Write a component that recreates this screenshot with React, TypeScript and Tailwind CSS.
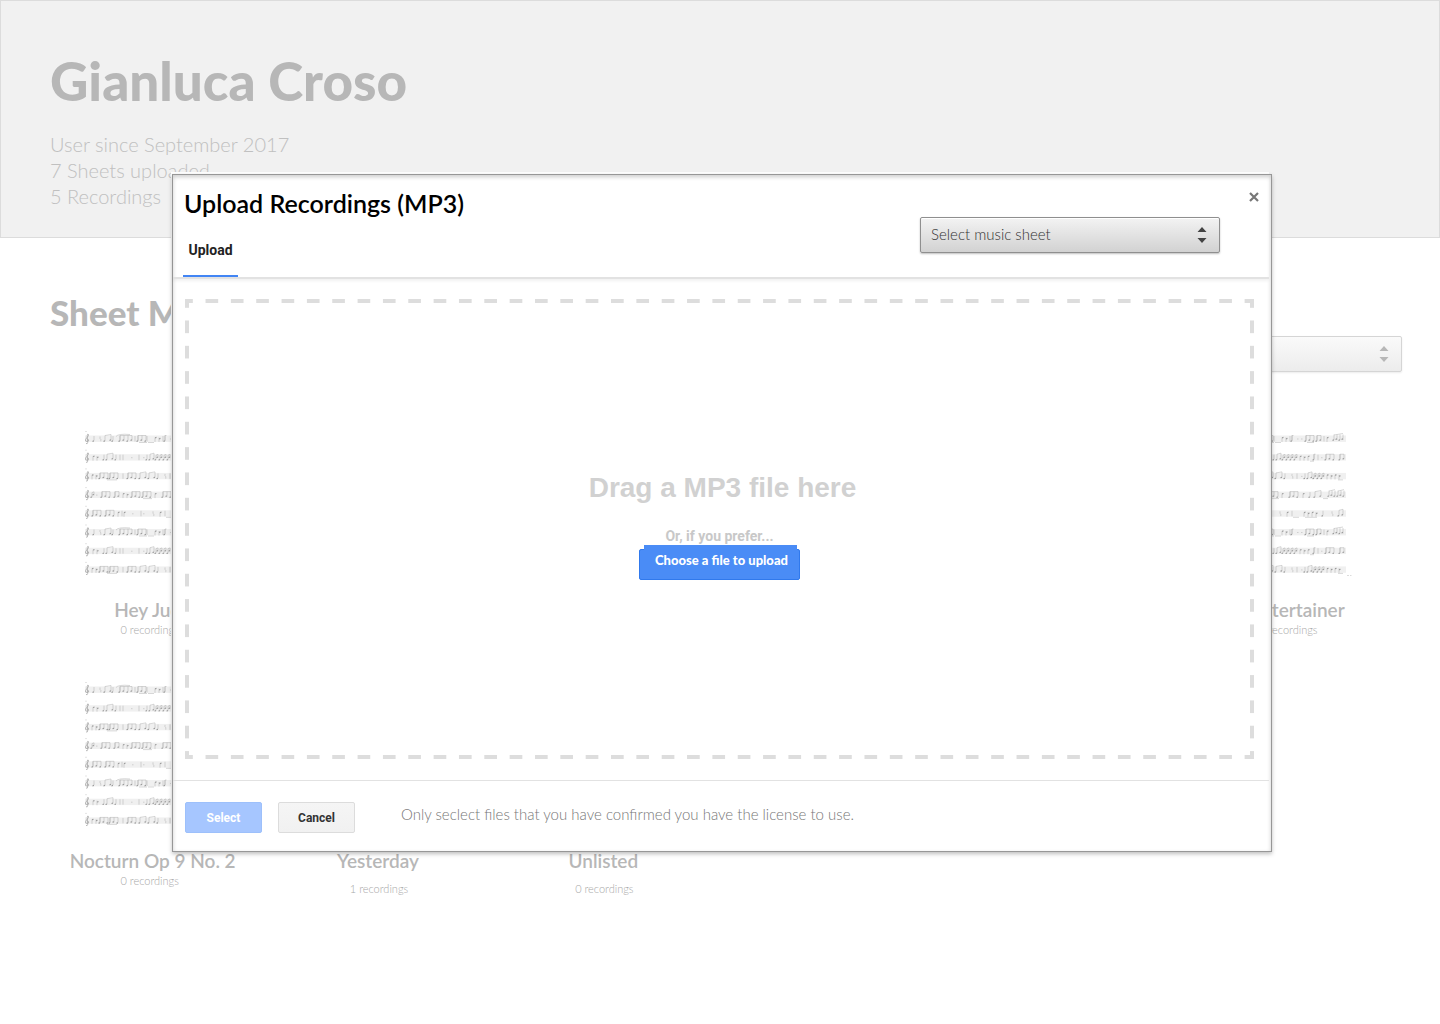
import React from "react";

const avenir = "font-['Lato',sans-serif]";

type Mark = [kind: string, x: number, n?: number];

const phrases: Mark[][] = [
  [["q", 9], ["r", 15], ["b", 20, 3], ["q", 28], ["s", 31, 14], ["g", 35, 4], ["|", 50], ["g", 53, 3], ["u", 54, 8], ["|", 62], ["u", 63, 6], ["p", 70, 2], ["|", 78], ["g", 80, 1], [".", 85], [".", 89], ["g", 94, 3], ["u", 95, 7], ["g", 105, 2], ["|", 112], ["p", 115, 1], ["h", 122, 4]],
  [["p", 8, 2], ["q", 19], ["b", 22, 3], ["q", 31], ["|", 35], ["|", 38], [".", 46], ["|", 54], [".", 58], ["q", 62], ["b", 65, 2], ["x", 71, 4], ["p", 88, 3], ["u", 98, 4], ["g", 102, 1], ["|", 106], [".", 109], ["g", 114, 3], ["g", 128, 2]],
  [["p", 7, 2], ["g", 15, 3], ["g", 25, 3], ["u", 22, 10], ["|", 38], ["g", 43, 3], ["b", 55, 3], ["b", 64, 3], ["q", 73], ["r", 80], ["|", 85], [".", 89], ["q", 93], ["b", 96, 2], ["x", 102, 3], ["p", 115, 4], ["u", 126, 5]],
  [["x", 7, 1], [".", 11], ["g", 17, 3], ["g", 30, 2], ["p", 38, 2], ["g", 47, 3], ["g", 58, 3], ["u", 58, 9], ["p", 70, 1], ["g", 78, 3], ["p", 91, 1], ["q", 98], ["b", 103, 3], ["u", 111, 5], ["h", 117, 3], ["h", 126, 3]],
  [["g", 8, 3], ["g", 21, 3], ["p", 33, 1], ["|", 37], ["p", 39, 1], [".", 47], ["|", 56], [".", 58], ["r", 68], ["p", 75, 1], ["|", 80], ["u", 81, 6], ["p", 92, 4], ["u", 93, 12], ["q", 111], ["r", 120], ["b", 127, 2]],
];
const staffOrder = [0, 1, 2, 3, 4, 0, 1, 2];

const head = (x: number, y: number) => `M${x - 1.5} ${y - 0.3}l1.500 -.4v1.200l-1.500 .4z`;

function drawHeads([kind, x, n = 1]: Mark): string {
  const steps = Array.from({ length: n }, (_, i) => i);
  switch (kind) {
    case "q":
      return head(x, 10.5);
    case "b":
      return head(x, 10.5) + head(x + n * 2, 9.5);
    case "g":
      return steps.map((i) => head(x + i * 4, 10.5 - (i % 2))).join("");
    case "p":
      return steps.map((i) => head(x + i * 4 + 1.5, 7 + (i % 2))).join("");
    case "h":
      return steps.map((i) => head(x + i * 3, 9.5 - (i % 2))).join("");
    case "x":
      return steps.map((i) => head(x + i * 4, 10.5) + head(x + i * 4 + 2, 8)).join("");
    default:
      return "";
  }
}

function drawStems([kind, x, n = 1]: Mark): string {
  const steps = Array.from({ length: n }, (_, i) => i);
  switch (kind) {
    case "q":
      return `M${x} 10V5.500`;
    case "r":
      return `M${x} 6v2l.8 .8v2`;
    case "b":
      return `M${x} 10.500V5l${n * 2} -1v5.500`;
    case "g":
      return `M${x} 10.500V5h${Math.max(1.5, (n - 1) * 4)}${steps.map((i) => `M${x + i * 4} 10V5`).join("")}`;
    case "p":
      return steps.map((i) => `M${x + i * 4} 11.500V7`).join("");
    case "h":
      return `${steps.map((i) => `M${x + i * 3} 9.500V4`).join("")}M${x} 4.500l${(n - 1) * 3} -1.500`;
    case "x":
      return steps.map((i) => `M${x + i * 4} 10.500V6l2 -.8v3.500`).join("");
    case "s":
      return `M${x} 6q2 -3 ${n} -2`;
    case "u":
      return `M${x} 12h${n}`;
    case "|":
      return `M${x} 5.500v5.500`;
    default:
      return `M${x} 8.500h1.500`;
  }
}

function SheetPreview({ endMark }: { endMark?: boolean }) {
  return (
    <svg viewBox="0 0 140 150" className="ml-[46px] h-[150px] w-[140px]" fill="none" aria-hidden="true">
      {staffOrder.map((p, i) => (
        <g key={i} transform={`translate(0 ${i * 18.7 + 0.5})`}>
          <rect x="0" y="5" width="134" height="6.4" fill="#f0f0f0" />
          <path d="M0 1h2" stroke="#dedede" strokeWidth=".8" />
          <path
            d="M1 13q1.500 .8 1.700-1L2.200 5q.2-2 1.300-1 .2 1.500-1.500 3Q-.2 9 .6 10.500q1.500 1.300 3 0 .4-1.800-1.200-1.700"
            stroke="#a8a8a8"
            strokeWidth=".8"
          />
          <path d={phrases[p].map(drawStems).join("")} stroke="#a6a6a6" strokeWidth=".45" />
          <path d={phrases[p].map(drawHeads).join("")} fill="#9c9c9c" />
        </g>
      ))}
      {endMark && <path d="M135 145.500h2M138 145.500h1.500" stroke="#dcdcdc" />}
    </svg>
  );
}

function Arrows({ className }: { className: string }) {
  return (
    <svg viewBox="0 0 10 18" className={`pointer-events-none absolute h-[18px] w-[10px] ${className}`} aria-hidden="true">
      <path d="M.5 6 5 1l4.500 5zM.5 12 5 17l4.500-5z" fill="currentColor" />
    </svg>
  );
}

type Sheet = { title: string; recordings: number; column?: string; countClass?: string; endMark?: boolean };
const sheets: Sheet[] = [
  { title: "Hey Jude", recordings: 0, column: "col-start-1", countClass: "pr-1" },
  { title: "The Entertainer", recordings: 0, column: "col-start-6", countClass: "pl-5", endMark: true },
  { title: "Nocturn Op 9 No. 2", recordings: 0, countClass: "pr-1" },
  { title: "Yesterday", recordings: 1, countClass: "pt-2 pl-1" },
  { title: "Unlisted", recordings: 0, countClass: "pt-2 pl-1" },
];

function Profile() {
  return (
    <div>
      <header className="h-[238px] border border-[#dcdcdc] bg-[#f1f1f1] px-[49px] pt-[50px]">
        <h1 className="text-[53px] leading-[60px] font-black text-[#b7b7b7]">Gianluca Croso</h1>
        <div className="mt-5 text-[20px] leading-[26px] font-light text-[#c0c0c0]">
          <p>User since September 2017</p>
          <p>7 Sheets uploaded</p>
          <p>5 Recordings</p>
        </div>
      </header>
      <main className="pt-[54px]">
        <h2 className="px-[50px] text-[35px] leading-[40px] font-black text-[#b7b7b7]">Sheet Music</h2>
        <div className="mt-1 flex justify-end pr-[38px]">
          <div className="relative text-[#b7b7b7]">
            <select aria-label="Sort sheets" className="block h-9 w-[300px] appearance-none rounded-[2px] border border-[#d5d5d5] bg-linear-to-b from-[#fafafa] to-[#ececec] px-2.5 text-[14px] shadow-[0_1px_2px_rgba(0,0,0,0.08)]">
              <option></option>
            </select>
            <Arrows className="top-[9px] right-[13px]" />
          </div>
        </div>
        <ul className="mt-[58px] grid grid-cols-6 gap-y-[45px] pr-[49px] pl-[39px]">
          {sheets.map((s) => (
            <li key={s.title} className={`h-[206px] whitespace-nowrap ${s.column ?? ""}`}>
              <SheetPreview endMark={s.endMark} />
              <h3 className="mt-[18px] pl-0.5 text-center text-[19px] leading-6 font-semibold text-[#b7b7b7]">{s.title}</h3>
              <p className={`text-center text-[11px] leading-4 font-light text-[#a8a8a8] ${s.countClass ?? ""}`}>{s.recordings} recordings</p>
            </li>
          ))}
        </ul>
      </main>
    </div>
  );
}

function UploadDialog() {
  return (
    <div className="absolute inset-x-0 top-0 pt-[174px] pr-[168px] pl-[172px]">
      <div className="absolute top-[172px] right-[171px] left-[171px] h-[678px] bg-white" />
      <section
        role="dialog"
        aria-labelledby="upload-title"
        className="relative border border-[#979797] bg-white shadow-[0_2px_4px_rgba(0,0,0,0.25),inset_0_2px_4px_rgba(0,0,0,0.2)]"
      >
        <div className="mr-0.5 flex h-[104px] justify-between border-b-2 border-[#e2e2e2] pl-[10px] shadow-[0_2px_3px_rgba(0,0,0,0.06)]">
          <div className="flex flex-col items-start justify-between">
            <h2 id="upload-title" className="mt-3 pl-px text-[25px] leading-8 font-semibold whitespace-nowrap text-black">
              Upload Recordings (MP3)
            </h2>
            <button className="h-[37px] w-[55px] border-b-2 border-[#4285f4] pb-[15px] font-['Roboto',sans-serif] text-[14px] leading-5 font-bold text-[#222]">
              Upload
            </button>
          </div>
          <div className="flex items-start">
            <div className="relative mt-[42px] mr-[29px] text-[#444]">
              <select aria-label="Music sheet" className="block h-9 w-[300px] appearance-none rounded-[2px] border border-[#8f8f8f] bg-linear-to-b from-[#f3f3f3] to-[#d2d2d2] px-2.5 pb-0.5 text-[15px] font-light text-[#333] shadow-[0_1px_2px_rgba(0,0,0,0.25),inset_0_1px_0_#fff]">
                <option>Select music sheet</option>
              </select>
              <Arrows className="top-[9px] right-[13px]" />
            </div>
            <button aria-label="Close" className="mt-[17px] mr-[10px] text-[#777]">
              <svg viewBox="0 0 10 10" className="size-[10px]" aria-hidden="true">
                <path d="M1 1l8 8m0-8l-8 8" stroke="currentColor" strokeWidth="2.200" />
              </svg>
            </button>
          </div>
        </div>
        <div className="pt-5 pr-[17px] pb-[21px] pl-3">
          <div className="flex h-[460px] flex-col items-center border-2 border-transparent [background-clip:border-box] [background-image:linear-gradient(90deg,#ddd_25%,transparent_25%,transparent_75%,#ddd_75%),linear-gradient(90deg,#ddd_25%,transparent_25%,transparent_75%,#ddd_75%),linear-gradient(#ddd_25%,transparent_25%,transparent_75%,#ddd_75%),linear-gradient(#ddd_25%,transparent_25%,transparent_75%,#ddd_75%)] [background-origin:padding-box] [background-position:0_-2px,0_calc(100%+2px),-2px_0,calc(100%+2px)_0] [background-repeat:round_no-repeat,round_no-repeat,no-repeat_round,no-repeat_round] [background-size:25.3px_4px,25.3px_4px,4px_25.3px,4px_25.3px] pt-[169px]">
            <p className="pl-[6px] font-['Liberation_Sans',sans-serif] text-[28px] leading-9 font-bold text-[#d1d1d1]">Drag a MP3 file here</p>
            <p className="mt-5 font-['Roboto',sans-serif] text-[14px] leading-5 font-bold text-[#c8c8c8]">Or, if you prefer...</p>
            <button className="relative mt-[3px] h-[31px] w-[161px] rounded-[2px] border border-[#3079ed] bg-[#4a8cf6] pb-3 pl-1 text-[13px] leading-5 font-black whitespace-nowrap text-white">
              <span className="absolute -top-[5px] right-0.5 left-1 h-2 bg-[#4a8cf6]" />
              Choose a file to upload
            </button>
          </div>
        </div>
        <footer className="mr-0.5 flex h-[71px] items-start border-t border-[#e2e2e2] pt-[21px] pl-3 font-['Roboto',sans-serif] text-[12px] font-bold">
          <button className="h-[31px] w-[77px] rounded-[2px] border border-[#9dc0fb] bg-[#a6c6ff] text-white">Select</button>
          <button className="ml-4 h-[31px] w-[77px] rounded-[2px] border border-[#dcdcdc] bg-linear-to-b from-[#f5f5f5] to-[#f1f1f1] text-[#333]">Cancel</button>
          <p className={`ml-[46px] pt-0.5 text-[15px] leading-5 font-light text-[#777] ${avenir}`}>
            Only seclect files that you have confirmed you have the license to use.
          </p>
        </footer>
      </section>
    </div>
  );
}

export default function App() {
  return (
    <div className={`relative min-h-screen bg-white ${avenir}`}>
      <Profile />
      <UploadDialog />
    </div>
  );
}
